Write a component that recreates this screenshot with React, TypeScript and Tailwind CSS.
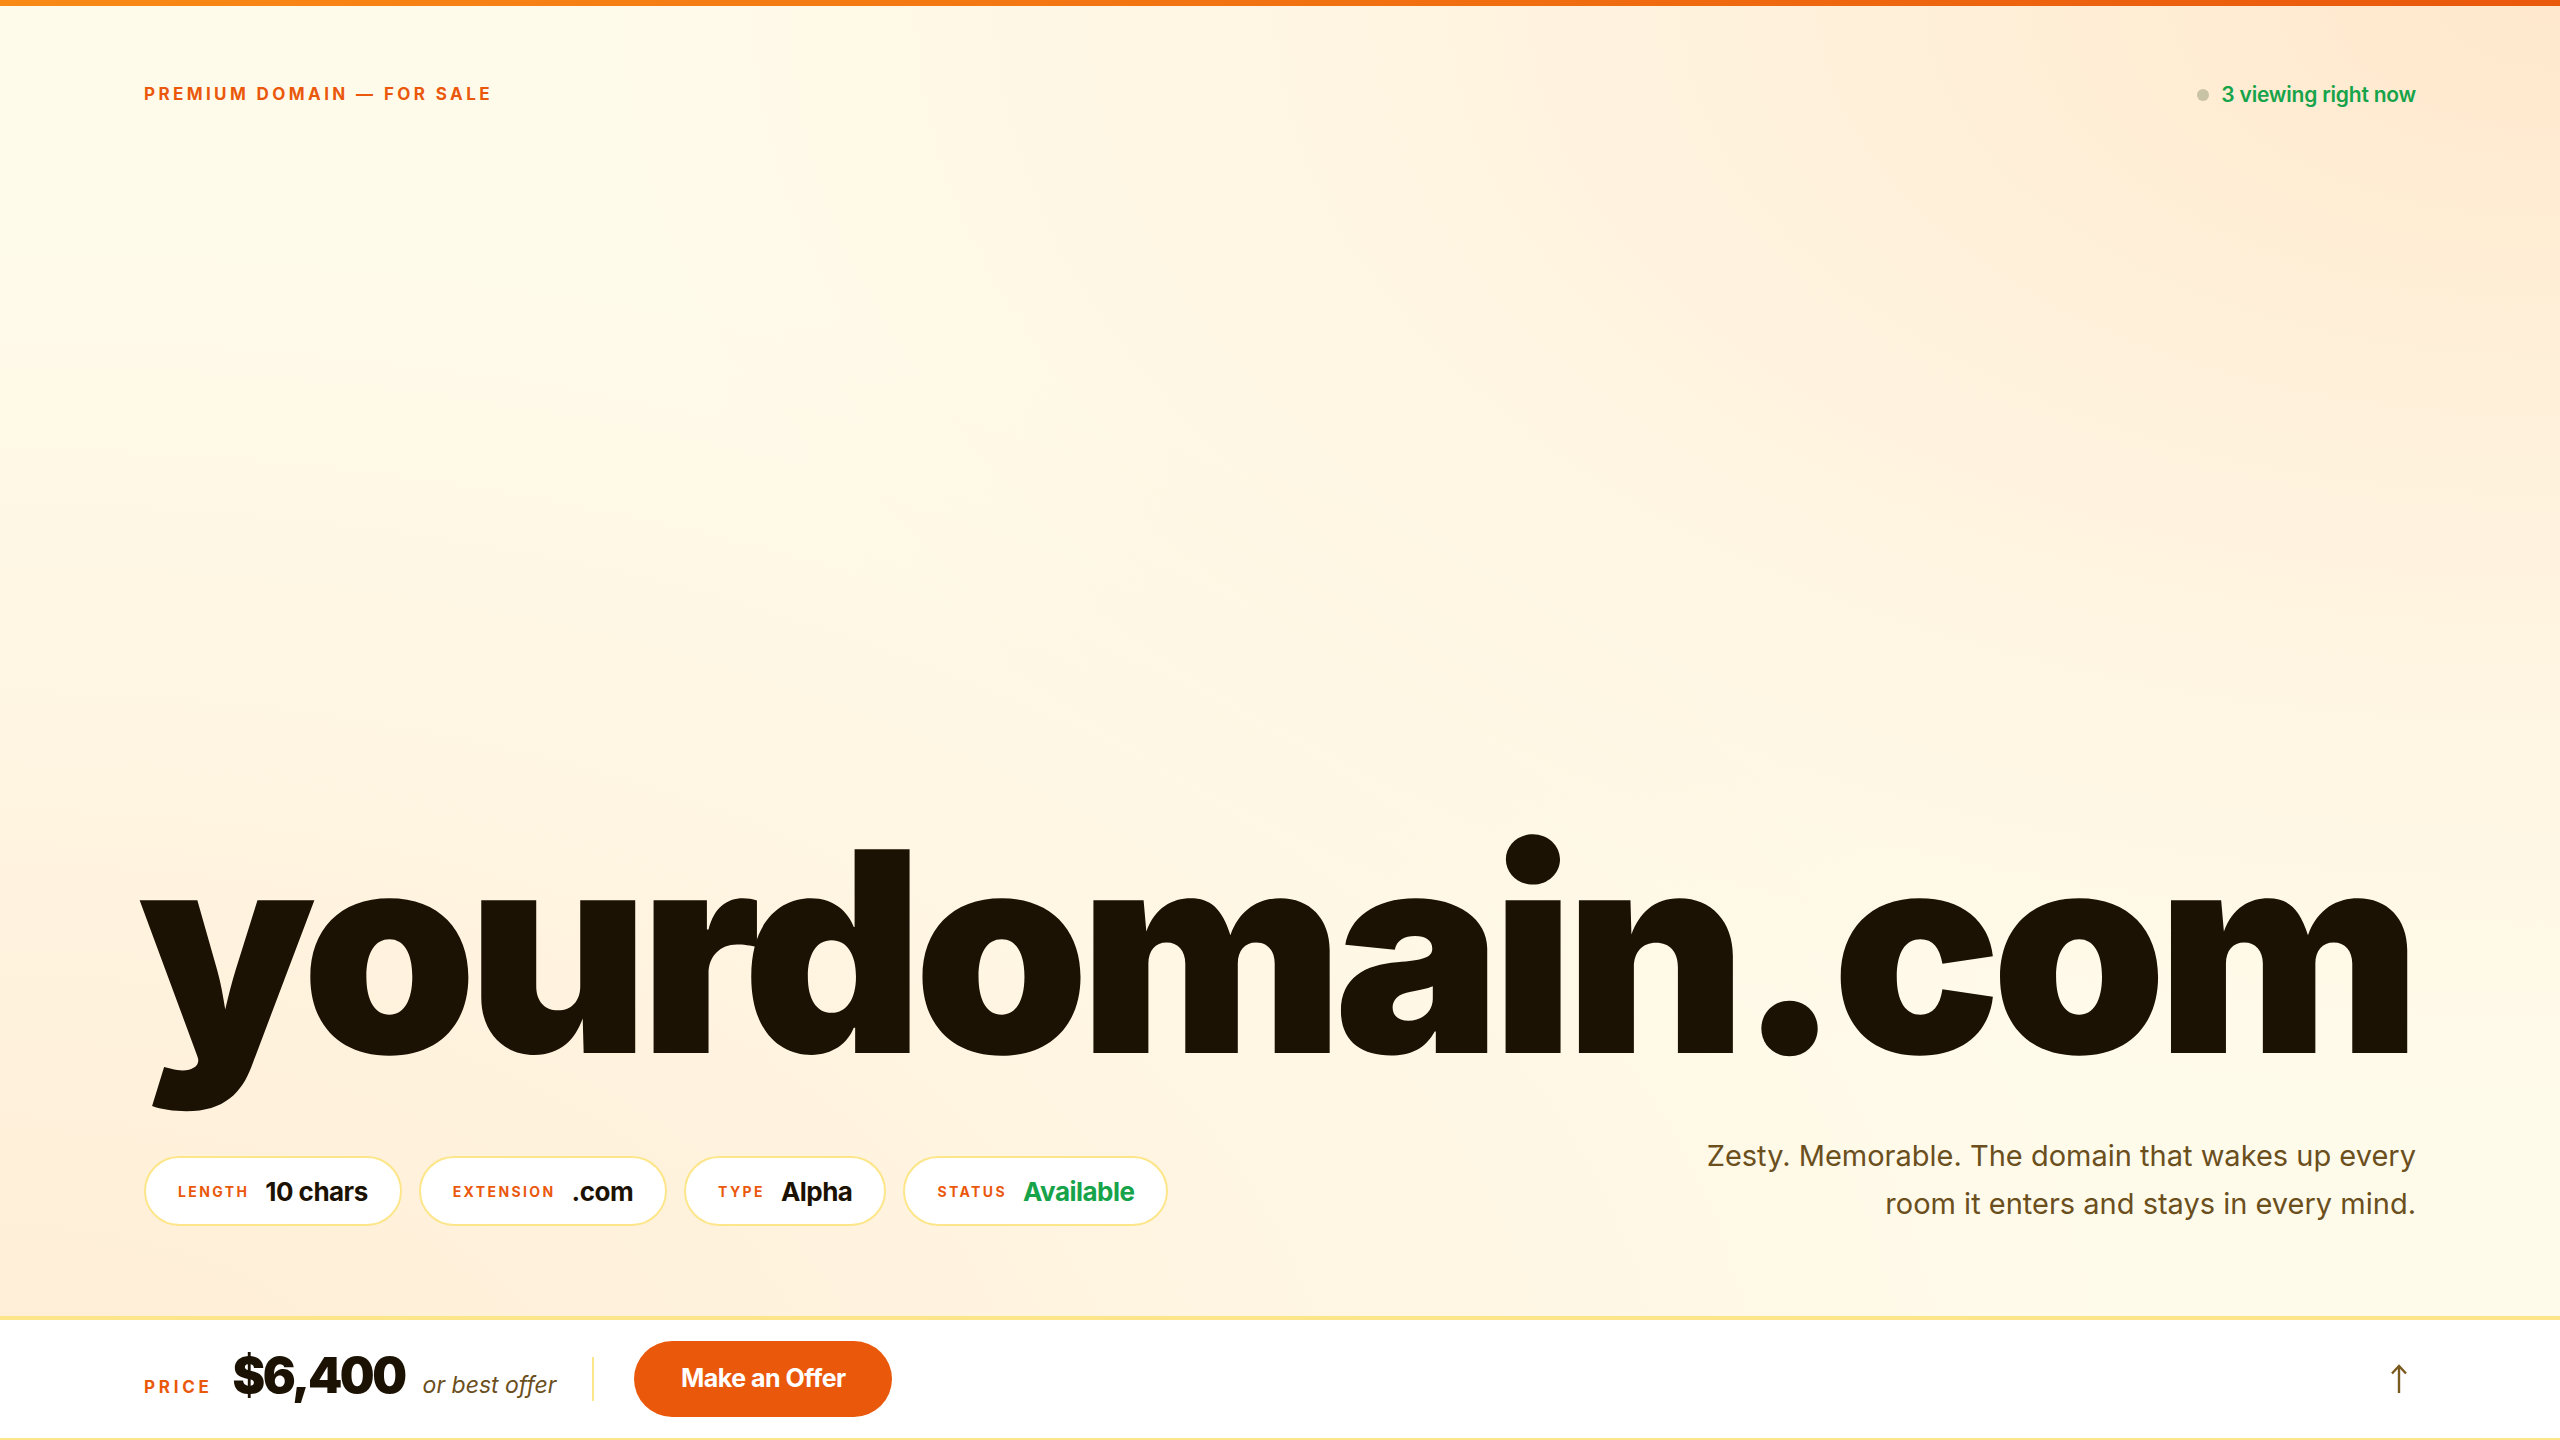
import React from 'react';

const chips = [
  { label: 'Length', value: '10 chars' },
  { label: 'Extension', value: '.com' },
  { label: 'Type', value: 'Alpha' },
  { label: 'Status', value: 'Available', green: true },
];

export default function App() {
  return (
    <div
      className="relative flex h-screen w-full flex-col overflow-hidden bg-[#fffbeb] text-[#1c1204]"
      style={{ fontFamily: 'Inter, "Noto Sans", sans-serif' }}
    >
      {/* soft warm glows */}
      <div className="pointer-events-none absolute inset-0 bg-[radial-gradient(ellipse_at_100%_0%,#ffe8cc_0%,rgba(255,237,213,0.6)_25%,rgba(255,251,235,0)_55%)]" />
      <div className="pointer-events-none absolute inset-0 bg-[radial-gradient(ellipse_at_0%_100%,#ffedd5_0%,rgba(255,237,213,0.5)_30%,rgba(255,251,235,0)_60%)]" />

      <div className="relative h-[6px] w-full bg-gradient-to-r from-[#f98a16] to-[#ea580c]" />

      <header className="relative flex items-center justify-between px-[144px] pt-[73px]">
        <p className="text-[17px] font-bold uppercase tracking-[0.2em] text-[#ea580c]">
          Premium Domain — For Sale
        </p>
        <div className="flex items-center gap-[12px]">
          <span className="h-[12px] w-[12px] rounded-full bg-[#c9c3a6]" />
          <span className="text-[21px] font-semibold tracking-[-0.01em] text-[#16a34a]">3 viewing right now</span>
        </div>
      </header>

      <main className="relative flex flex-1 flex-col justify-end px-[144px] pb-[90px]">
        <h1 className="ml-[-6px] text-[280px] font-black leading-[0.8] tracking-[-0.034em] text-[#1c1204]">
          yourdomain.com
        </h1>

        <div className="mt-[68px] flex items-end justify-between">
          <div className="flex gap-[17px]">
            {chips.map(c => (
              <div
                key={c.label}
                className="flex h-[70px] items-center gap-[16px] rounded-full border-2 border-[#fde68a] bg-white px-[32px]"
              >
                <span className="text-[14px] font-bold uppercase tracking-[0.17em] text-[#ea580c]">
                  {c.label}
                </span>
                <span className={`text-[26px] font-bold tracking-[-0.02em] ${c.green ? 'text-[#16a34a]' : 'text-[#1c1204]'}`}>
                  {c.value}
                </span>
              </div>
            ))}
          </div>
          <p className="mb-[-2px] max-w-[780px] text-right text-[29px] leading-[48px] text-[#6b4f1d]">
            Zesty. Memorable. The domain that wakes up every room it enters and stays in every mind.
          </p>
        </div>
      </main>

      <footer className="relative flex h-[124px] items-center justify-between border-t-4 border-b-2 border-[#fde68a] bg-white px-[144px]">
        <div className="flex items-center">
          <div className="mt-[-6px] flex items-baseline">
            <span className="text-[17px] font-bold uppercase tracking-[0.22em] text-[#ea580c]">Price</span>
            <span className="ml-[20px] text-[49px] font-black tracking-[-0.05em] text-[#1c1204]">$6,400</span>
            <span className="ml-[18px] text-[23px] italic text-[#6b4f1d]">or best offer</span>
          </div>
          <span className="ml-[36px] h-[44px] w-[2px] bg-[#fde68a]" />
          <button className="ml-[40px] flex h-[76px] w-[258px] items-center justify-center rounded-full bg-[#ea580c] text-[25px] font-bold tracking-[-0.02em] text-white">
            Make an Offer
          </button>
        </div>
        <svg className="mr-[8px] h-[30px] w-[18px]" viewBox="0 0 18 30" fill="none" stroke="#7a5a1e" strokeWidth="2.4">
          <path d="M9 29V2" />
          <path d="M2 9.5L9 2l7 7.5" strokeLinejoin="miter" />
        </svg>
      </footer>
    </div>
  );
}
